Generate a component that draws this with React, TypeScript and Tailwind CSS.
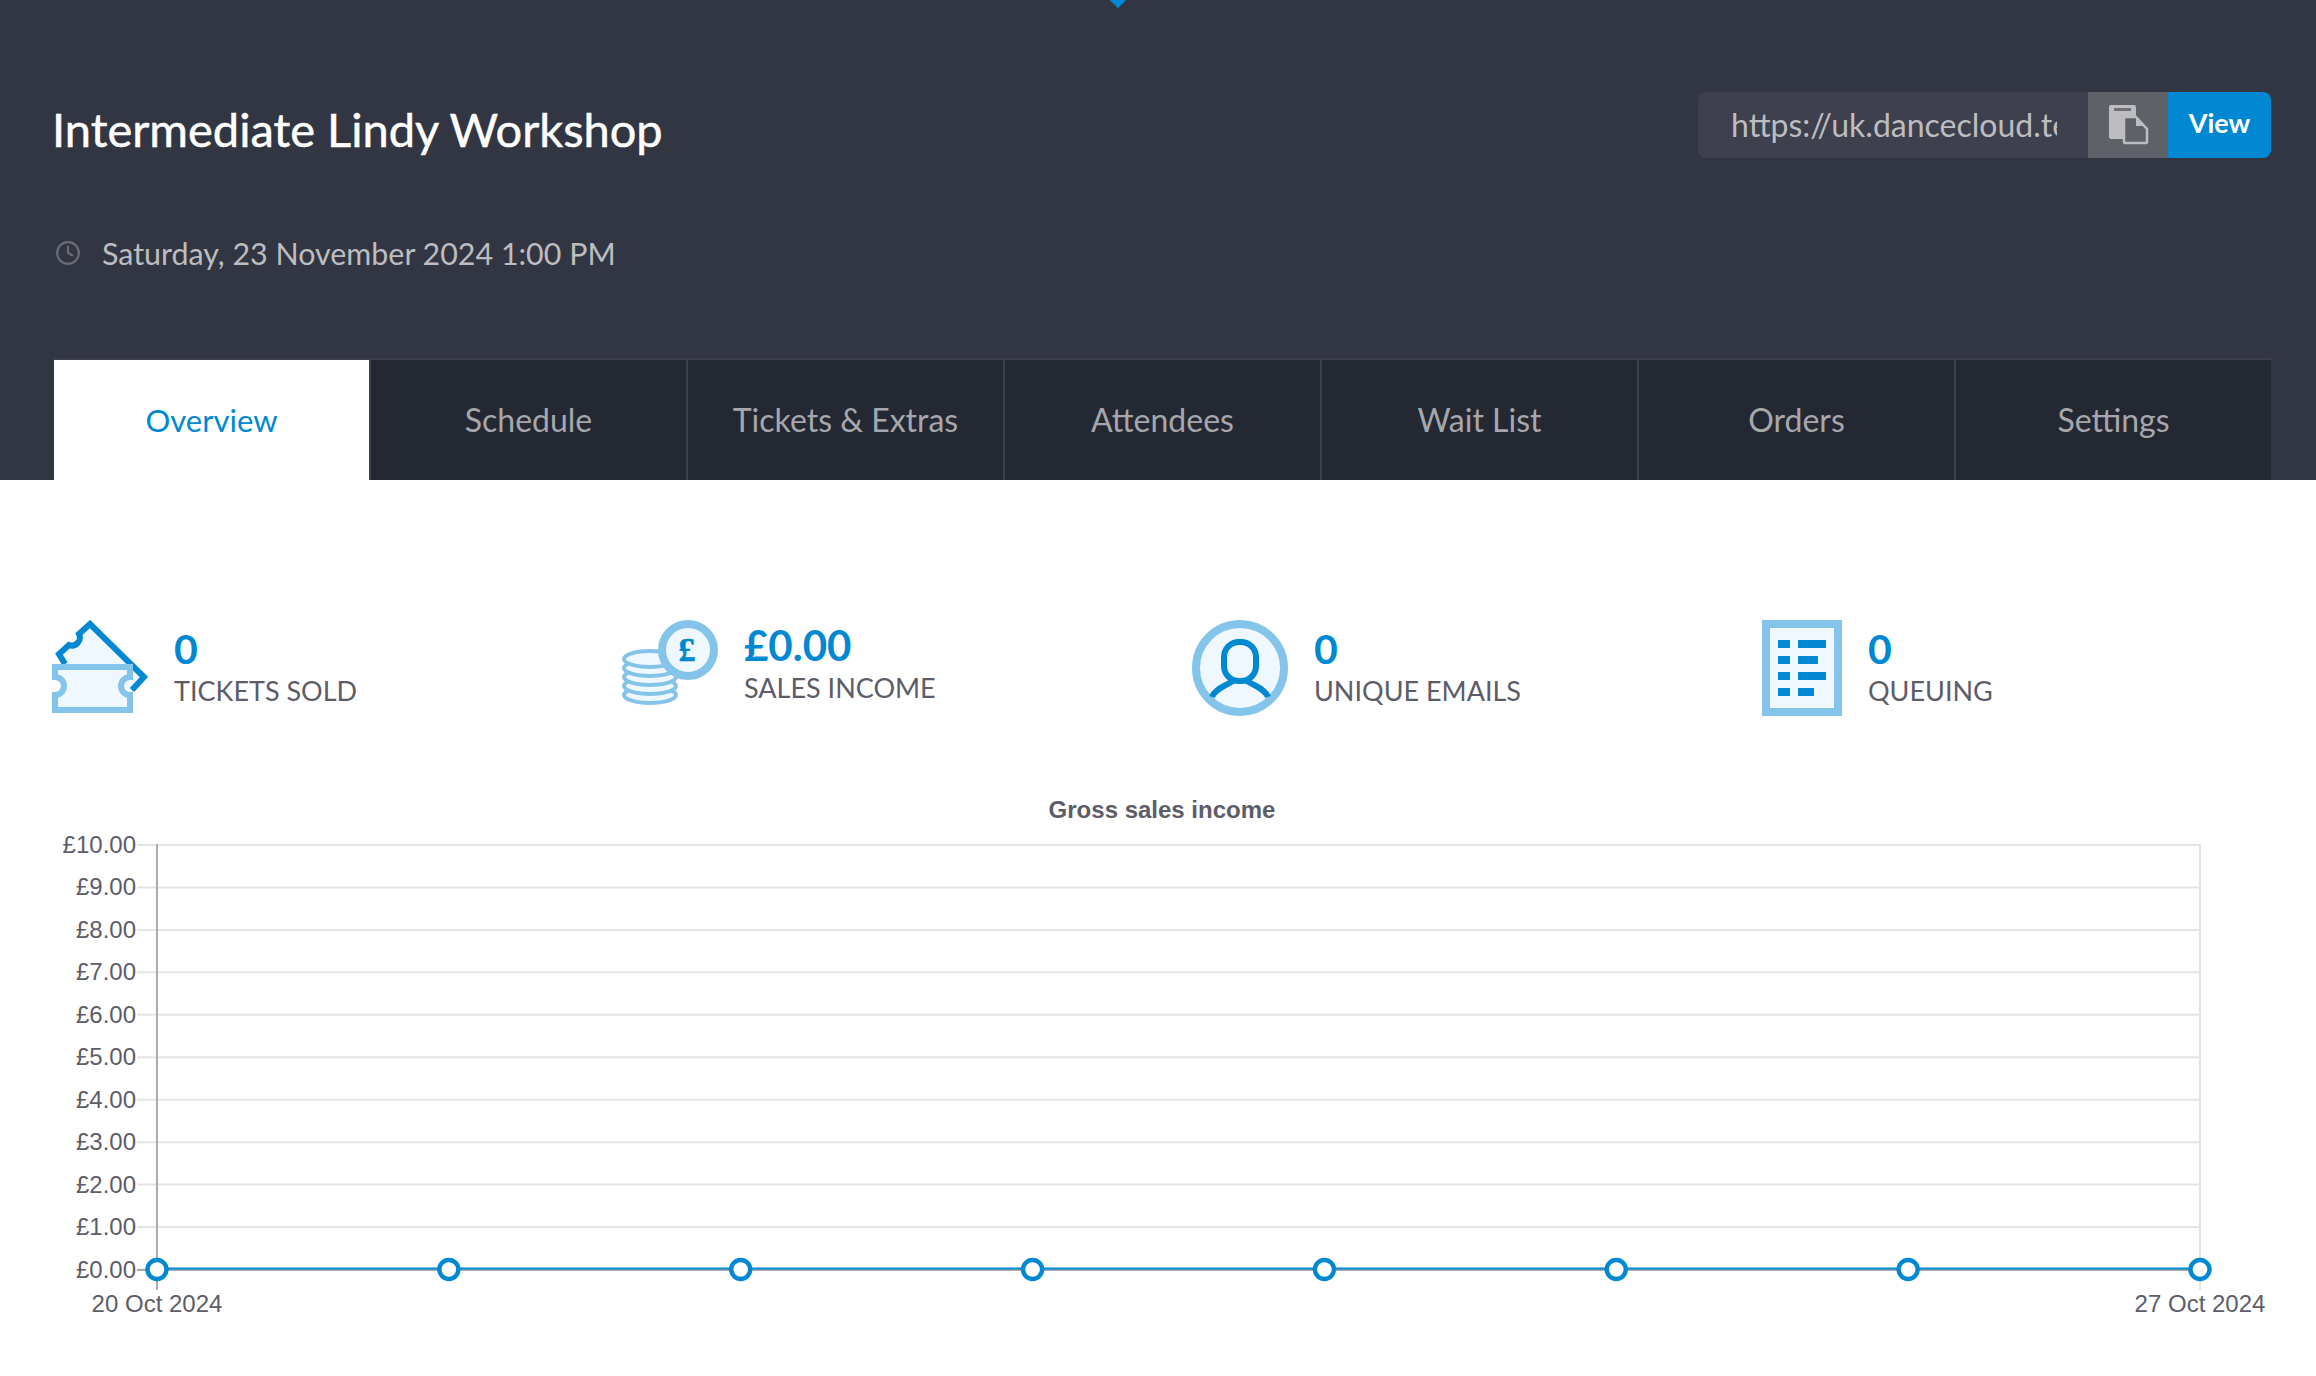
import { Clock } from 'lucide-react';

const tabs = ['Overview', 'Schedule', 'Tickets & Extras', 'Attendees', 'Wait List', 'Orders', 'Settings'];

const BLUE = '#0088d3';
const LIGHT = '#85c4ea';
const PALE = '#f0f8ff';

function TicketIcon() {
    return (
        <svg width="96" height="96" viewBox="0 0 96 96">
            <path d="M13 44 L7 34 L17 25 A8 8 0 0 0 27 14 L38 4 L92 57 L80 70 Z" fill={PALE} />
            <path d="M13 44 L7 34 L17 25 A8 8 0 0 0 27 14 L38 4 L92 57 L80 70" fill="none" stroke={BLUE} strokeWidth="6" />
            <path d="M3 47 H78 V57 A9 9 0 0 0 78 75 V90 H3 V75 A9 9 0 0 0 3 57 Z" fill={PALE} stroke={LIGHT} strokeWidth="6" />
        </svg>
    );
}

function CoinsIcon() {
    return (
        <svg width="96" height="96" viewBox="0 0 96 96">
            {[75, 66, 57, 48, 39].map((y) => (
                <ellipse key={y} cx="28" cy={y} rx="26" ry="8" fill={PALE} stroke={LIGHT} strokeWidth="4" />
            ))}
            <circle cx="66" cy="30" r="26" fill={PALE} stroke={LIGHT} strokeWidth="8" />
            <text x="65" y="41" textAnchor="middle" fill={BLUE} stroke={BLUE} strokeWidth="0.6" fontSize="34" fontWeight="700" fontFamily="'Liberation Serif', serif">£</text>
        </svg>
    );
}

function PersonIcon() {
    return (
        <svg width="96" height="96" viewBox="0 0 96 96">
            <circle cx="48" cy="48" r="44" fill={PALE} stroke={LIGHT} strokeWidth="8" />
            <rect x="32" y="22" width="32" height="39" rx="15" fill="none" stroke={BLUE} strokeWidth="6" />
            <path d="M20 77 C23 69 33 66 41 61 M55 61 C63 66 73 69 76 77" fill="none" stroke={BLUE} strokeWidth="6" />
        </svg>
    );
}

function QueueIcon() {
    return (
        <svg width="80" height="96" viewBox="0 0 80 96">
            <rect x="4" y="4" width="72" height="88" fill={PALE} stroke={LIGHT} strokeWidth="8" />
            {[[20, 28], [36, 20], [52, 28], [68, 16]].map(([y, w]) => (
                <g key={y} fill={BLUE}>
                    <rect x="16" y={y} width="12" height="8" />
                    <rect x="36" y={y} width={w} height="8" />
                </g>
            ))}
        </svg>
    );
}

function CopyIcon() {
    return (
        <svg width="40" height="40" viewBox="0 0 40 40" className="ml-[2px]">
            <path d="M2 0 H25 Q27 0 27 2 V34 H2 Q0 34 0 32 V2 Q0 0 2 0 Z" fill="#bdbdc0" />
            <rect x="5" y="3" width="17" height="3" fill="#6d6f77" />
            <path d="M15 12 H27 L38 24 V37 Q38 38 37 38 H16 Q15 38 15 37 Z" fill="#5f6169" stroke="#bdbdc0" strokeWidth="2.5" />
            <path d="M27 13 V21 H35 Z" fill="#bdbdc0" />
        </svg>
    );
}

function Stat({ icon, value, label, big }: { icon: React.ReactNode; value: string; label: string; big?: boolean }) {
    return (
        <div className="flex items-start gap-[26px]">
            {icon}
            <div className={big ? 'pt-0' : 'pt-[5px]'}>
                <div className={big ? 'text-[42px] leading-[50px] font-bold text-[#0088d3]' : 'text-[41px] leading-[48px] font-bold text-[#0088d3]'}>{value}</div>
                <div className="text-[27px] leading-[36px] text-[#5c5d68]">{label}</div>
            </div>
        </div>
    );
}

function Chart() {
    const top = 790;
    const x0 = 157;
    const x1 = 2200;
    const step = (1269.5 - 845) / 10;
    const rows = Array.from({ length: 11 }, (_, i) => ({ v: 10 - i, y: 845 + i * step - top }));
    const bottom = 1269.5 - top;
    const points = Array.from({ length: 8 }, (_, i) => x0 + (i * (x1 - x0)) / 7);
    return (
        <svg width="2316" height="560" viewBox="0 0 2316 560" className="block mt-[74px]" fontFamily="'Liberation Sans', Arial, sans-serif" fontSize="24" fill="#5c5d68">
            <text x="1162" y="28" textAnchor="middle" fontWeight="700">Gross sales income</text>
            {rows.map((r) => (
                <g key={r.v}>
                    <line x1="137" x2={x1} y1={r.y} y2={r.y} stroke="#e4e4e6" strokeWidth="2" />
                    <text x="136" y={r.y + 8} textAnchor="end">£{r.v}.00</text>
                </g>
            ))}
            <line x1={x1} x2={x1} y1={54} y2={500} stroke="#e4e4e6" strokeWidth="2" />
            <line x1={x0} x2={x0} y1={54} y2={500} stroke="#a9a9b0" strokeWidth="2" />
            <line x1="137" x2={x1} y1={bottom + 0.5} y2={bottom + 0.5} stroke="#a9a9b0" strokeWidth="2" />
            <line x1={x0} x2={x1} y1={bottom - 1} y2={bottom - 1} stroke={BLUE} strokeWidth="2" />
            {points.map((x) => (
                <circle key={x} cx={x} cy={bottom} r="9.5" fill="#fff" stroke={BLUE} strokeWidth="4.5" />
            ))}
            <text x={x0} y="522" textAnchor="middle">20 Oct 2024</text>
            <text x={x1} y="522" textAnchor="middle">27 Oct 2024</text>
        </svg>
    );
}

export default function App() {
    return (
        <div className="w-[2316px] h-[1376px] bg-white overflow-hidden font-['Lato',sans-serif]">
            {/* Header */}
            <div className="relative h-[480px] bg-[#323642] pl-[54px] pr-[45px] flex flex-col">
                <div className="absolute left-[1110px] top-[-11px] w-4 h-4 rotate-45 bg-[#0088d3]" />

                <div className="flex justify-between items-start pt-[92px]">
                    <h1 className="text-[47px] leading-[74px] text-white ml-[-2px] [-webkit-text-stroke:0.5px_white]">Intermediate Lindy Workshop</h1>
                    <div className="flex h-[66px] w-[573px] rounded-lg overflow-hidden">
                        <div className="w-[390px] bg-[#3e404d] pl-[33px] pr-[31px] flex items-center">
                            <span className="block overflow-hidden whitespace-nowrap text-[32px] text-[#bdbdc0]">https://uk.dancecloud.test</span>
                        </div>
                        <div className="w-[80px] bg-[#5f6169] flex items-center justify-center">
                            <CopyIcon />
                        </div>
                        <div className="flex-1 bg-[#0088d3] flex items-center justify-center text-white text-[27px] font-bold pb-1">View</div>
                    </div>
                </div>

                <div className="flex items-center gap-[21px] mt-[67px] pl-[1px]">
                    <Clock size={26} strokeWidth={2} className="text-[#6a6d76]" />
                    <span className="text-[30.4px] leading-10 text-[#bdbdc0]">Saturday, 23 November 2024 1:00 PM</span>
                </div>

                {/* Tabs */}
                <div className="mt-auto flex h-[122px] border-t-2 border-[#3d404c]">
                    {tabs.map((t, i) => (
                        <div
                            key={t}
                            className={
                                i === 0
                                    ? 'flex-1 bg-white text-[#0088d3] text-[31px] flex items-center justify-center'
                                    : 'flex-1 bg-[#242833] text-[#a6a7ac] text-[32px] flex items-center justify-center border-l-2 border-[#3d404c]'
                            }
                        >
                            {t}
                        </div>
                    ))}
                </div>
            </div>

            {/* Stats */}
            <div className="grid grid-cols-[repeat(4,570px)] pl-[52px] pt-[140px]">
                <Stat icon={<TicketIcon />} value="0" label="TICKETS SOLD" />
                <Stat icon={<CoinsIcon />} value="£0.00" label="SALES INCOME" big />
                <Stat icon={<PersonIcon />} value="0" label="UNIQUE EMAILS" />
                <Stat icon={<QueueIcon />} value="0" label="QUEUING" />
            </div>

            <Chart />
        </div>
    );
}
